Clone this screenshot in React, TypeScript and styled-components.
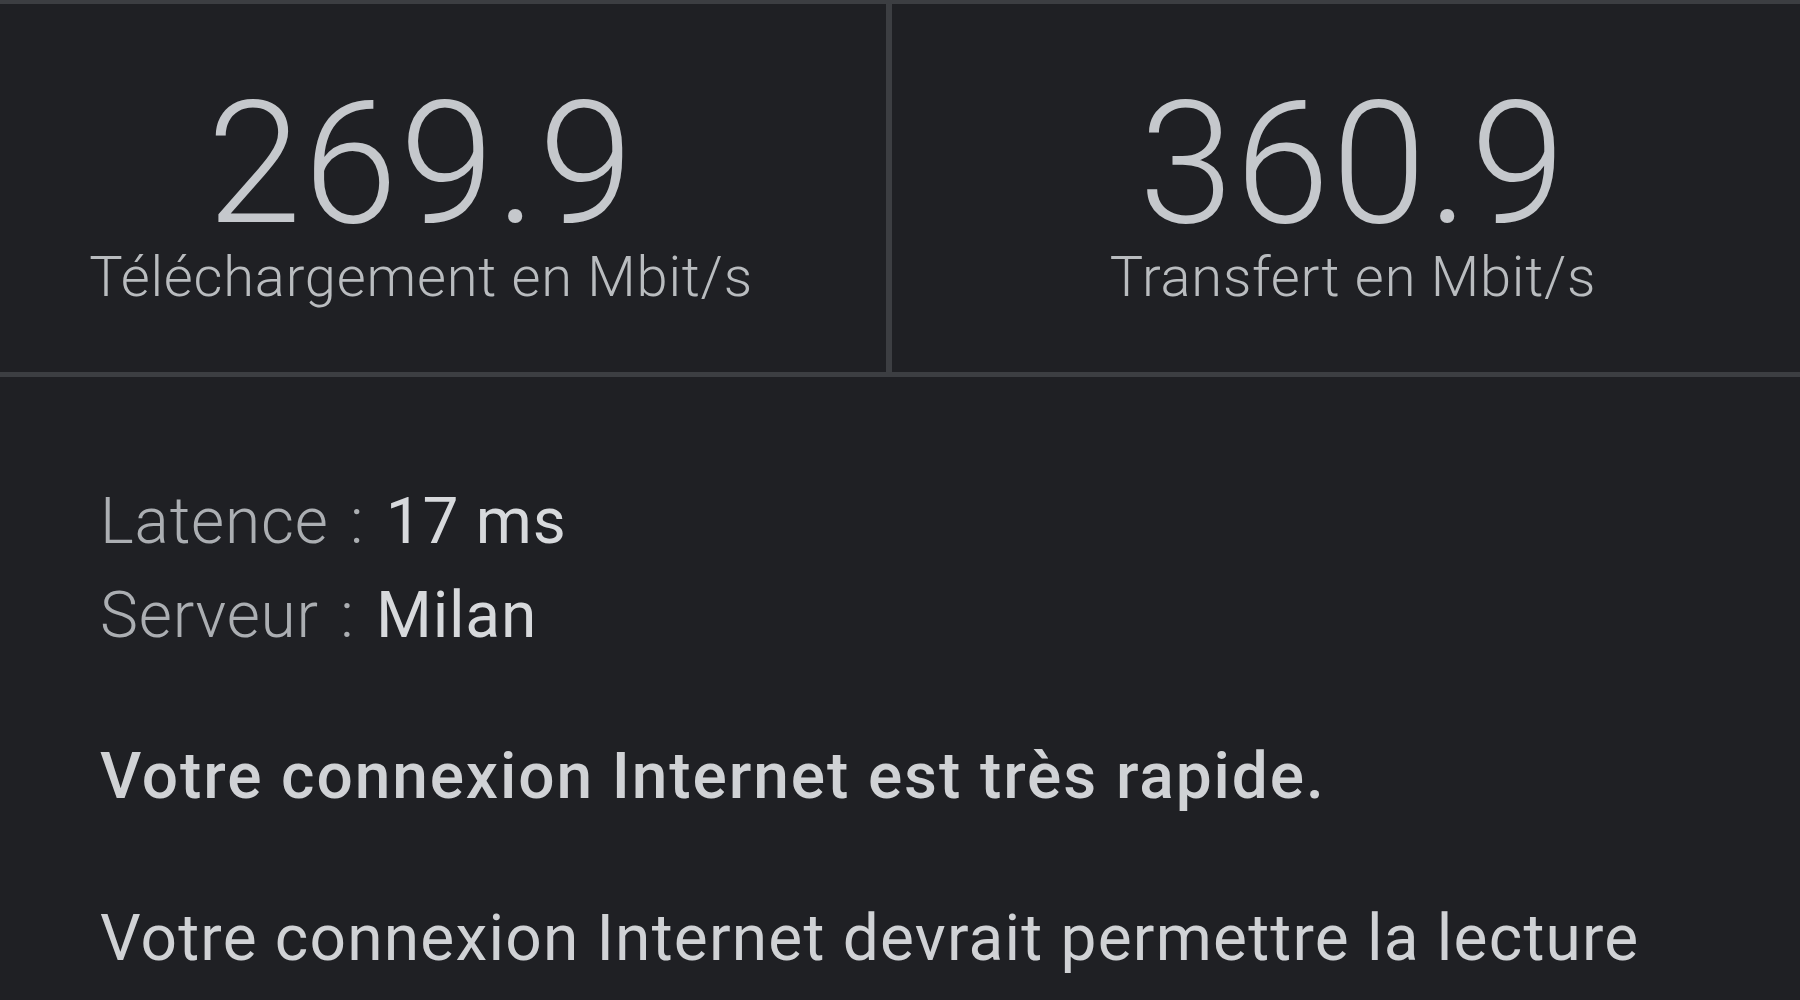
import React from 'react';
import styled, { createGlobalStyle } from 'styled-components';

const GlobalStyle = createGlobalStyle`
    html, body {
        margin: 0;
        padding: 0;
        background-color: #1f2024;
        overflow: hidden;
    }
`;

const Page = styled.div`
    height: 100vh;
    background-color: #1f2024;
    border-top: 4px solid #3c3e42;
    box-sizing: border-box;
    font-family: Roboto, "Liberation Sans", sans-serif;
    overflow: hidden;
`;

const Results = styled.div`
    display: grid;
    grid-template-columns: 892px 1fr;
    height: 368px;
    border-bottom: 5px solid #3c3e42;
`;

const Cell = styled.div<{ $left?: boolean }>`
    display: flex;
    flex-direction: column;
    align-items: center;
    padding-top: 75px;
    padding-left: ${(p) => (p.$left ? 0 : 14)}px;
    padding-right: ${(p) => (p.$left ? 44 : 0)}px;
    border-right: ${(p) => (p.$left ? '6px solid #3c3e42' : 'none')};
`;

const Speed = styled.div`
    font-size: 170px;
    font-weight: 300;
    line-height: 1;
    letter-spacing: 2px;
    color: #c5c8cc;
`;

const Unit = styled.div`
    font-size: 56px;
    font-weight: 300;
    line-height: 1;
    letter-spacing: 0.8px;
    color: #b9bcbf;
`;

const Details = styled.div`
    padding: 98px 0 0 100px;
`;

const Info = styled.div`
    font-size: 64px;
    line-height: 94px;
    letter-spacing: 0.8px;
`;

const Key = styled.span`
    font-weight: 300;
    word-spacing: 5px;
    color: #abaeb2;
`;

const Value = styled.span`
    font-weight: 400;
    color: #d7d9dc;
`;

const Verdict = styled.p<{ $strong?: boolean }>`
    margin: ${(p) => (p.$strong ? 67 : 68)}px 0 0;
    font-size: 64px;
    line-height: 94px;
    font-weight: ${(p) => (p.$strong ? 500 : 400)};
    letter-spacing: ${(p) => (p.$strong ? 1.9 : 1.2)}px;
    color: #d0d2d5;
    max-width: 1620px;
`;

function App() {
    return (
        <Page>
            <GlobalStyle />
            <Results>
                <Cell $left>
                    <Speed>269.9</Speed>
                    <Unit>Téléchargement en Mbit/s</Unit>
                </Cell>
                <Cell>
                    <Speed>360.9</Speed>
                    <Unit>Transfert en Mbit/s</Unit>
                </Cell>
            </Results>
            <Details>
                <Info>
                    <div>
                        <Key>Latence : </Key>
                        <Value>17 ms</Value>
                    </div>
                    <div>
                        <Key>Serveur : </Key>
                        <Value>Milan</Value>
                    </div>
                </Info>
                <Verdict $strong>Votre connexion Internet est très rapide.</Verdict>
                <Verdict>Votre connexion Internet devrait permettre la lecture</Verdict>
            </Details>
        </Page>
    );
}

export default App;
